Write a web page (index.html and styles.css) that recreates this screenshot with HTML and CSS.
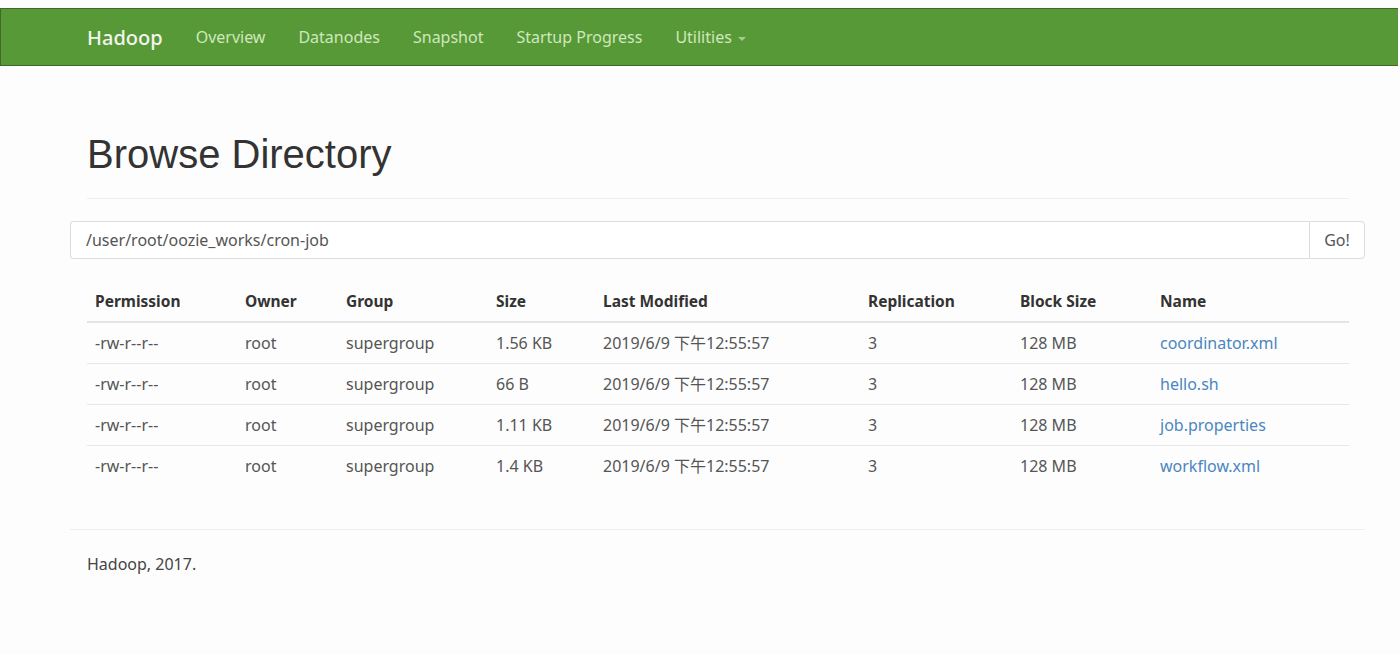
FILE: index.html
```html
<!DOCTYPE html>
<html lang="en">
<head>
<meta charset="utf-8">
<title>Browsing HDFS</title>
<link rel="stylesheet" href="styles.css">
</head>
<body>
<header class="navbar">
  <div class="nav-inner">
    <a class="brand" href="#">Hadoop</a>
    <ul class="nav-links">
      <li><a href="#">Overview</a></li>
      <li><a href="#">Datanodes</a></li>
      <li><a href="#">Snapshot</a></li>
      <li><a href="#">Startup Progress</a></li>
      <li><a href="#">Utilities <span class="caret"></span></a></li>
    </ul>
  </div>
</header>
<main class="container">
  <div class="page-header">
    <h1>Browse Directory</h1>
  </div>
  <form class="path-form">
    <input class="path-input" type="text" value="/user/root/oozie_works/cron-job">
    <button class="go-btn" type="button">Go!</button>
  </form>
  <table class="listing">
    <thead>
      <tr>
        <th class="c-perm">Permission</th>
        <th class="c-owner">Owner</th>
        <th class="c-group">Group</th>
        <th class="c-size">Size</th>
        <th class="c-mod">Last Modified</th>
        <th class="c-rep">Replication</th>
        <th class="c-bs">Block Size</th>
        <th class="c-name">Name</th>
      </tr>
    </thead>
    <tbody>
      <tr>
        <td>-rw-r--r--</td><td>root</td><td>supergroup</td><td>1.56 KB</td>
        <td>2019/6/9 下午12:55:57</td><td>3</td><td>128 MB</td>
        <td><a href="#">coordinator.xml</a></td>
      </tr>
      <tr>
        <td>-rw-r--r--</td><td>root</td><td>supergroup</td><td>66 B</td>
        <td>2019/6/9 下午12:55:57</td><td>3</td><td>128 MB</td>
        <td><a href="#">hello.sh</a></td>
      </tr>
      <tr>
        <td>-rw-r--r--</td><td>root</td><td>supergroup</td><td>1.11 KB</td>
        <td>2019/6/9 下午12:55:57</td><td>3</td><td>128 MB</td>
        <td><a href="#">job.properties</a></td>
      </tr>
      <tr>
        <td>-rw-r--r--</td><td>root</td><td>supergroup</td><td>1.4 KB</td>
        <td>2019/6/9 下午12:55:57</td><td>3</td><td>128 MB</td>
        <td><a href="#">workflow.xml</a></td>
      </tr>
    </tbody>
  </table>
  <footer class="footer">
    <p>Hadoop, 2017.</p>
  </footer>
</main>
</body>
</html>
```
FILE: styles.css
```css
html, body {
  margin: 0;
  padding: 0;
}
body {
  background: #fdfdfd;
  color: #333;
  font-family: "Noto Sans", "Noto Sans CJK SC", sans-serif;
  font-size: 16px;
  padding-top: 8px;
}
a { text-decoration: none; }

.navbar {
  background: #589937;
  border-top: 1px solid #3d6a2a;
  border-bottom: 1px solid #3d6a2a;
  border-left: 1px solid #3d6a2a;
  margin-right: 2px;
  height: 56px;
}
.nav-inner {
  display: flex;
  align-items: center;
  height: 100%;
  padding-left: 86px;
}
.brand {
  color: #f2f5ee;
  font-size: 20px;
  font-weight: 500;
  margin-right: 33px;
}
.nav-links {
  display: flex;
  list-style: none;
  margin: 0;
  padding: 0;
  gap: 33px;
}
.nav-links a {
  color: #cfe8bd;
  font-size: 16px;
}
.caret {
  display: inline-block;
  width: 0;
  height: 0;
  margin-left: 2px;
  vertical-align: middle;
  border-top: 4px solid #a9c994;
  border-left: 4px solid transparent;
  border-right: 4px solid transparent;
}

.container {
  margin: 0 35px 0 70px;
}
.page-header {
  margin: 66px 16px 0 17px;
  padding-bottom: 22px;
  border-bottom: 1px solid #eeeeee;
}
.page-header h1 {
  margin: 0;
  font-family: "Liberation Sans", Arial, sans-serif;
  font-weight: 400;
  font-size: 40px;
  line-height: 44px;
  color: #333;
}

.path-form {
  display: flex;
  margin-top: 22px;
  height: 38px;
}
.path-input {
  flex: 1;
  height: 38px;
  box-sizing: border-box;
  border: 1px solid #dcdcdc;
  border-right: none;
  border-radius: 4px 0 0 4px;
  padding: 0 15px;
  font-family: "Noto Sans", sans-serif;
  font-size: 16px;
  color: #555;
  background: #fff;
}
.go-btn {
  width: 56px;
  height: 38px;
  box-sizing: border-box;
  border: 1px solid #dcdcdc;
  border-radius: 0 4px 4px 0;
  background: #fff;
  font-family: "Noto Sans", sans-serif;
  font-size: 16px;
  color: #555;
  padding: 0;
}

.listing {
  width: calc(100% - 33px);
  margin: 22px 16px 0 17px;
  border-collapse: collapse;
}
.listing th, .listing td {
  text-align: left;
  padding: 9px 8px;
  line-height: 22px;
  white-space: nowrap;
}
.listing th {
  font-weight: 700;
  font-size: 15.5px;
  color: #333;
  border-bottom: 2px solid #e4e4e4;
}
.listing td {
  color: #555;
  border-top: 1px solid #e8e8e8;
}
.listing tbody tr:first-child td { border-top: none; }
.listing td a { color: #4a86c0; }

.c-perm { width: 134px; }
.c-owner { width: 85px; }
.c-group { width: 134px; }
.c-size { width: 91px; }
.c-mod { width: 249px; }
.c-rep { width: 136px; }
.c-bs { width: 124px; }

.footer {
  margin-top: 43px;
  border-top: 1px solid #eeeeee;
  padding: 0 17px;
}
.footer p {
  margin: 23px 0 0;
  color: #444;
  font-size: 16px;
  line-height: 22px;
}
```
